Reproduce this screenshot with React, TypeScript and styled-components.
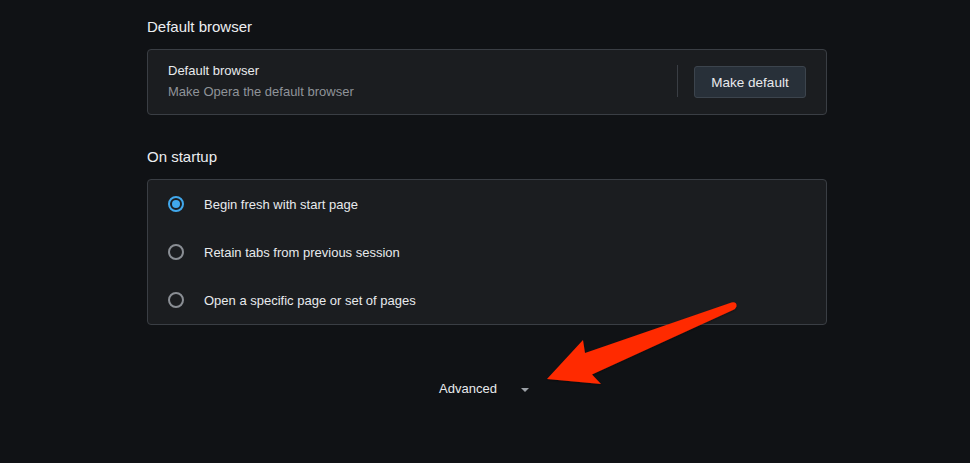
import React from "react";
import styled, { createGlobalStyle } from "styled-components";

const Global = createGlobalStyle`
  html, body { margin: 0; padding: 0; background: #101215; }
  body { font-family: "Liberation Sans", Arial, sans-serif; color: #e8eaed; }
`;

const Page = styled.div`
  position: relative;
  width: 970px;
  height: 463px;
  overflow: hidden;
  background: #101215;
  display: flex;
  justify-content: center;
  padding-left: 4px;
  box-sizing: border-box;
`;

const Column = styled.div`
  width: 680px;
  display: flex;
  flex-direction: column;
  padding-top: 17px;
`;

const Section = styled.section`
  display: flex;
  flex-direction: column;
  gap: 12px;
  & + & { margin-top: 32px; }
`;

const SectionTitle = styled.h2`
  margin: 0;
  font-size: 15px;
  font-weight: 400;
  line-height: 20px;
  color: #eceef1;
`;

const Card = styled.div`
  background: #1b1d20;
  border: 1px solid #3a3e44;
  border-radius: 4px;
  display: flex;
  flex-direction: column;
`;

const SettingRow = styled.div`
  display: flex;
  align-items: center;
  padding: 11px 20px 13px 20px;
`;

const SettingText = styled.div`
  flex: 1;
  display: flex;
  flex-direction: column;
`;

const SettingLabel = styled.div`
  font-size: 13px;
  line-height: 20px;
  color: #e8eaed;
`;

const SettingSub = styled.div`
  font-size: 13px;
  line-height: 20px;
  color: #8f9399;
  margin-top: 1px;
  margin-bottom: -1px;
`;

const Separator = styled.div`
  width: 1px;
  height: 32px;
  background: #3a3e44;
  margin-right: 16px;
`;

const Button = styled.button`
  height: 32px;
  width: 112px;
  box-sizing: border-box;
  background: #283039;
  border: 1px solid #3c444d;
  border-radius: 3px;
  color: #e8eaed;
  font-family: "Liberation Sans", Arial, sans-serif;
  font-size: 13.5px;
  padding: 0;
  margin-top: 2px;
`;

const RadioRow = styled.label`
  display: flex;
  align-items: center;
  height: 48px;
  padding: 0 20px;
  gap: 20px;
  font-size: 13px;
  color: #e8eaed;
`;

const Radio = styled.span<{ $checked?: boolean }>`
  width: 16px;
  height: 16px;
  box-sizing: border-box;
  border-radius: 50%;
  border: 2px solid ${(p) => (p.$checked ? "#41a8ec" : "#8a8e94")};
  display: flex;
  align-items: center;
  justify-content: center;
  &::after {
    content: "";
    width: 8px;
    height: 8px;
    border-radius: 50%;
    background: ${(p) => (p.$checked ? "#41a8ec" : "transparent")};
  }
`;

const AdvancedRow = styled.div`
  display: flex;
  justify-content: center;
  align-items: center;
  margin-top: 54px;
  margin-right: 6px;
  gap: 24px;
  font-size: 13px;
  line-height: 20px;
  color: #e8eaed;
`;

const Caret = styled.span`
  width: 0;
  height: 0;
  border-left: 4.5px solid transparent;
  border-right: 4.5px solid transparent;
  border-top: 4.5px solid #9ba0a6;
  margin-top: 1px;
`;

const Annotation = styled.svg`
  position: absolute;
  left: 0;
  top: 0;
  pointer-events: none;
`;

const options = [
  { label: "Begin fresh with start page", checked: true },
  { label: "Retain tabs from previous session", checked: false },
  { label: "Open a specific page or set of pages", checked: false },
];

export default function App() {
  return (
    <>
      <Global />
      <Page>
        <Column>
          <Section>
            <SectionTitle>Default browser</SectionTitle>
            <Card>
              <SettingRow>
                <SettingText>
                  <SettingLabel>Default browser</SettingLabel>
                  <SettingSub>Make Opera the default browser</SettingSub>
                </SettingText>
                <Separator />
                <Button>Make default</Button>
              </SettingRow>
            </Card>
          </Section>
          <Section>
            <SectionTitle>On startup</SectionTitle>
            <Card>
              {options.map((o) => (
                <RadioRow key={o.label}>
                  <Radio $checked={o.checked} />
                  {o.label}
                </RadioRow>
              ))}
            </Card>
          </Section>
          <AdvancedRow>
            Advanced
            <Caret />
          </AdvancedRow>
        </Column>
        <Annotation width="970" height="463" viewBox="0 0 970 463">
          <defs>
            <filter id="sh" x="-10%" y="-10%" width="120%" height="120%">
              <feDropShadow dx="0" dy="1" stdDeviation="1" floodColor="#000" floodOpacity="0.4" />
            </filter>
          </defs>
          <path
            d="M547 379 L583 340 L585 353 L731.5 302.5 Q737 301.5 736.5 306.5 Q735.5 309 733 310 L592 374.5 L601 384 Z"
            fill="#ff2a00"
            filter="url(#sh)"
          />
        </Annotation>
      </Page>
    </>
  );
}
